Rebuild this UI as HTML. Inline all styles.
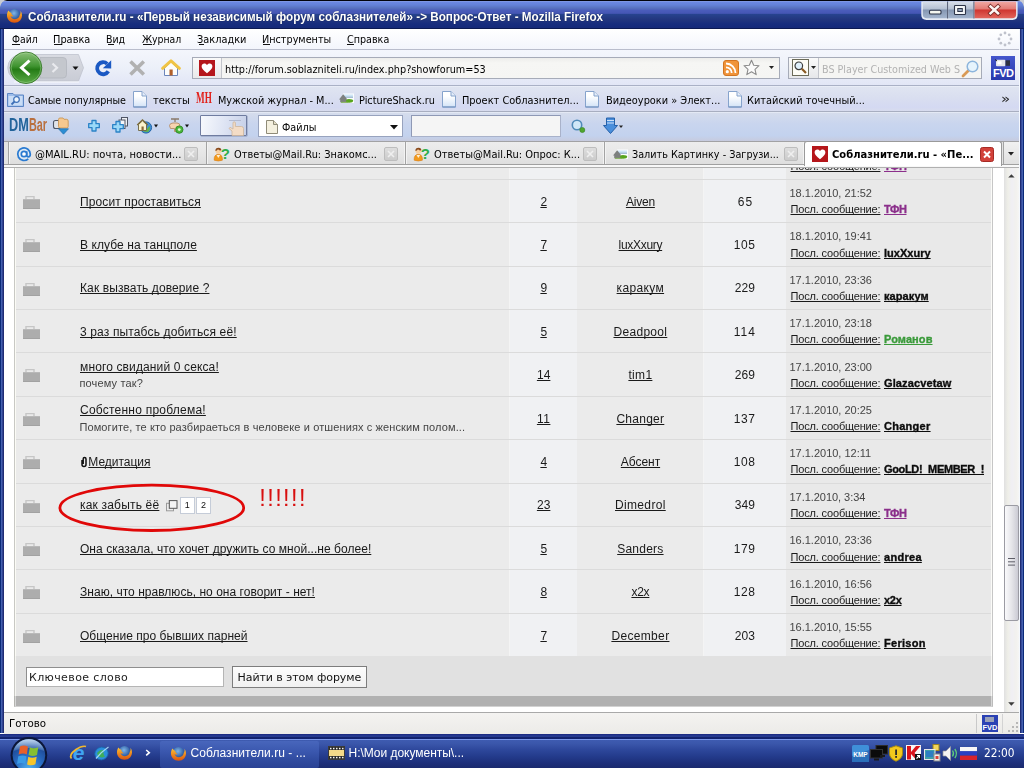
<!DOCTYPE html>
<html lang="ru">
<head>
<meta charset="utf-8">
<title>Соблазнители.ru - «Первый независимый форум соблазнителей» -> Вопрос-Ответ - Mozilla Firefox</title>
<style>
html,body{margin:0;padding:0}
body{width:1024px;height:768px;overflow:hidden;position:relative;background:#1c3a9a;font-family:"Liberation Sans",sans-serif;}
.a{position:absolute}
.t{position:absolute;white-space:pre;line-height:1;text-underline-offset:1px;text-decoration-thickness:1px;text-decoration-skip-ink:none}
.dj{font-family:"DejaVu Sans","Liberation Sans",sans-serif}
.sf{font-family:"Liberation Serif",serif}
.t{transform-origin:0 50%}
.bn{-webkit-text-stroke:.35px;text-decoration-thickness:1.4px}
.sh{text-shadow:0 0 1px rgba(0,0,20,.6)}
svg{position:absolute;overflow:visible}
/* window frame */
#title{left:0;top:0;width:1024px;height:29px;background:linear-gradient(#03040c 0,#03040c .8px,#8fa6e6 1px,#6c88e2 2px,#6482d8 5px,#5872c0 8px,#4a5cba 10.5px,#4556b4 13.4px,#27448f 14px,#23377f 19px,#172d7e 24px,#152a7a 27.5px,#0c1a52 28.2px,#0c1a52 29px)}
#corner-l{left:0;top:0;width:0;height:0}
#lb{left:0;top:29px;width:4px;height:710px;background:linear-gradient(90deg,#0a2a78 0,#0a2a78 .7px,#4560b0 1.3px,#3f59a8 2.2px,#1f2c74 2.9px,#1f2c74 4px)}
#rb{left:1019px;top:29px;width:5px;height:710px;background:linear-gradient(90deg,#f4f8fe 0,#f4f8fe .6px,#1f2c74 1.1px,#1f2c74 2px,#3f59a8 2.7px,#4560b0 3.6px,#0a2a78 4.3px,#0a2a78 5px)}
#bb{left:0;top:733px;width:1024px;height:6px;background:linear-gradient(#ffffff 0,#ffffff .9px,#1b2b80 1.2px,#1f3088 2px,#2c429a 3.2px,#14246f 4.5px,#0f2070 6px)}
#menubar{left:4px;top:29px;width:1015px;height:20px;background:linear-gradient(#ffffff,#f3f5fc)}
#menuline{left:4px;top:49px;width:1015px;height:1px;background:#b9bdcc}
#nav{left:4px;top:50px;width:1015px;height:35px;background:linear-gradient(#f4f6fc,#ecf0f9 50%,#e2e6f6)}
#navline{left:4px;top:85px;width:1015px;height:1px;background:#aab1c6}
#bm{left:4px;top:86px;width:1015px;height:25px;background:linear-gradient(#eff3fb 0,#dfe4f1 1.2px,#d9def0 50%,#d4d9f2 85%,#d8dcee 100%)}
#bmline{left:4px;top:111px;width:1015px;height:1px;background:#a8aec0}
#dm{left:4px;top:112px;width:1015px;height:29px;background:linear-gradient(#eef2fa 0,#d5dcec 1.2px,#c9d5ee 40%,#c3d2ee 82%,#c7cbde 100%)}
#tabs{left:4px;top:141.3px;width:1015px;height:26.7px;background:#e3e3e3;border-top:1px solid #a2a2a4;box-sizing:border-box}
#tabs .bl{left:0;top:21.7px;width:1015px;height:1px;background:#a0a0a0}
#tabs .bw{left:0;top:22.7px;width:1015px;height:2px;background:#f8f8f8}
#tabs .bl2{left:0;top:24.7px;width:1015px;height:1px;background:#b0b0b0}
.tab{top:142.3px;height:21.7px;background:linear-gradient(#ededed,#e6e6e6 55%,#dedede);border-left:1px solid #a3a3a3;box-sizing:border-box;box-shadow:inset 1px 0 #f3f3f3,inset -1px 0 #f3f3f3}
.tab.act{top:141.3px;height:24.7px;background:#fff;border:1px solid #9a9a9a;border-bottom:none;border-radius:3px 3px 0 0;box-shadow:none}
.tclose{width:14px;height:14px;top:147px;border:1px solid #bdbdbd;border-radius:2px;background:linear-gradient(#dedede,#cbcbcb);box-sizing:border-box}
/* content */
#page{left:4px;top:168px;width:1000px;height:544px;background:#fff;overflow:hidden}
#tbl{left:10px;top:0;width:975px;height:488.3px;background:#ebebeb;border-left:1px solid #c8c8c4;border-right:1px solid #c6c6c6;padding:0 1px;box-shadow:inset 1px 0 #fbfbf5,inset -1px 0 #fbfbf8}
.col{top:0;height:488.3px}
.rl{left:12px;width:975px;height:1px;background:#dbdbdb}
#foot{left:10px;top:488.3px;width:975px;height:40px;background:#e1e1e1;border-left:1px solid #c8c8c4;border-right:1px solid #c6c6c6;padding:0 1px;box-shadow:inset 1px 0 #f6f6f2,inset -1px 0 #f6f6f4}
#dark{left:10px;top:528.3px;width:975px;height:9.4px;background:#b1b1b1;border-left:1px solid #b4b4b0;border-right:1px solid #bbb;border-bottom:1px solid #d2d2d2;padding:0 1px;box-shadow:inset 1px 0 #d8d8d8,inset -1px 0 #d8d8d8}
#sb{left:1003.5px;top:168px;width:15.5px;height:544px;background:linear-gradient(90deg,#e0e0e0 0,#e6e6e4 1.5px,#efefe8 4px,#f0eff4 8px,#f2f1ee 12px,#f6f6f6 15.5px)}
#thumb{left:1004px;top:505px;width:14.5px;height:116px;border:1px solid #9b9ba3;border-radius:2px;box-sizing:border-box;background:linear-gradient(90deg,#fafafc,#e6e6ea 50%,#cbcbd4)}
#status{left:4px;top:712px;width:1015px;height:22px;background:linear-gradient(#f4f3f1,#ecebe8);border-top:1px solid #a9a9a9;box-sizing:border-box}
#task{left:0;top:739px;width:1024px;height:29px;background:linear-gradient(#7b97e8 0,#7b97e8 .9px,#3e5bb0 1.3px,#3a56aa 5px,#2d479b 11px,#233a8a 18px,#1d2f7a 24px,#1a2a6e 29px)}
.fold{width:17px;height:13px}
</style>
</head>
<body>
<!-- ===== window frame ===== -->
<div class="a" id="title"></div>
<svg style="left:0;top:0" width="8" height="8"><path d="M0 0H7Q1 1 0 7Z" fill="#c9ccd2"/></svg>
<svg style="left:1016px;top:0" width="8" height="8"><path d="M8 0H1Q7 1 8 7Z" fill="#c9ccd2"/></svg>
<div class="a" id="lb"></div><div class="a" id="rb"></div><div class="a" id="bb"></div>
<!-- firefox icon -->
<svg style="left:6px;top:7px" width="17" height="17" viewBox="0 0 17 17">
 <defs><radialGradient id="fxg" cx=".45" cy=".35" r=".6"><stop offset="0" stop-color="#7fb6e8"/><stop offset="1" stop-color="#1d4a94"/></radialGradient>
 <linearGradient id="fxo" x1="0" y1="0" x2="0" y2="1"><stop offset="0" stop-color="#f7c338"/><stop offset=".5" stop-color="#f08a1c"/><stop offset="1" stop-color="#d9540f"/></linearGradient></defs>
 <circle cx="8.5" cy="8" r="6" fill="url(#fxg)"/>
 <path d="M2.5 3.5C0.5 6 .3 10.5 3 13.5 6 16.6 11.5 16.4 14.3 13.2 16.6 10.5 16.6 6.5 14.5 3.8 14.8 5.5 14.5 6.8 13.8 7.8 13.6 10.6 11.3 12.3 8.8 12.2 6.6 12.1 5 10.8 4.6 9 5.6 9.8 6.8 9.7 7.6 9 6.2 8.6 5.3 7.4 5.4 6 4.2 5.6 3.2 4.6 2.5 3.5Z" fill="url(#fxo)"/>
</svg>
<!-- caption buttons -->
<svg style="left:920px;top:0" width="99" height="21" viewBox="920 0 99 21">
 <defs>
 <linearGradient id="cb1" x1="0" y1="0" x2="0" y2="1"><stop offset="0" stop-color="#d9dfea"/><stop offset=".45" stop-color="#b4bfd2"/><stop offset=".5" stop-color="#8596b2"/><stop offset="1" stop-color="#a3b4cd"/></linearGradient>
 <linearGradient id="cb2" x1="0" y1="0" x2="0" y2="1"><stop offset="0" stop-color="#f0a9a4"/><stop offset=".45" stop-color="#e27a74"/><stop offset=".5" stop-color="#cf3530"/><stop offset="1" stop-color="#e2655c"/></linearGradient>
 </defs>
 <path d="M921.300 1.500V15Q921.300 19.900 926.500 19.900H1012.500Q1017.600 19.900 1017.600 15V1.500Z" fill="#e6eaf4"/>
 <path d="M922.800 1.500H947V18.300H927Q922.800 18.300 922.800 14.500Z" fill="url(#cb1)"/>
 <path d="M948.200 1.500H973.300V18.300H948.200Z" fill="url(#cb1)"/>
 <path d="M974.500 1.500H1016.100V14.500Q1016.100 18.300 1012 18.300H974.500Z" fill="url(#cb2)"/>
 <path d="M947.600 1.500V18.500M973.900 1.500V18.500" stroke="#3b4560" stroke-width=".9"/>
 <rect x="929.500" y="10.300" width="11.500" height="3.700" rx="1" fill="#f4f6f0" stroke="#2d3448" stroke-width="1.100"/>
 <rect x="954.500" y="5.500" width="11" height="9" rx=".8" fill="#f4f6f8" stroke="#2d3448" stroke-width="1.100"/>
 <rect x="957.800" y="8.500" width="4.500" height="3" fill="#9aa9c0" stroke="#2d3448" stroke-width="1"/>
 <path d="M990.500 6.500L998 13.300M998 6.500L990.500 13.300" stroke="#7a2a26" stroke-width="4.200" stroke-linecap="square"/>
 <path d="M990.500 6.500L998 13.300M998 6.500L990.500 13.300" stroke="#fdf5f3" stroke-width="2.500" stroke-linecap="square"/>
</svg>
<!-- ===== menubar ===== -->
<div class="a" id="menubar"></div><div class="a" id="menuline"></div>
<!-- menu access-key underlines -->
<div class="a" style="left:12.0px;top:44.200px;width:7.5px;height:1px;background:#111"></div>
<div class="a" style="left:54.0px;top:44.200px;width:7.5px;height:1px;background:#111"></div>
<div class="a" style="left:107.5px;top:44.200px;width:6.5px;height:1px;background:#111"></div>
<div class="a" style="left:142.5px;top:44.200px;width:9.5px;height:1px;background:#111"></div>
<div class="a" style="left:198.5px;top:44.200px;width:5.5px;height:1px;background:#111"></div>
<div class="a" style="left:262.5px;top:44.200px;width:7.5px;height:1px;background:#111"></div>
<div class="a" style="left:346.5px;top:44.200px;width:7.5px;height:1px;background:#111"></div>
<!-- throbber -->
<svg style="left:997px;top:31px" width="16" height="16" viewBox="-8 -8 16 16">
 <g fill="#bfc2cc"><circle cx="0" cy="-6" r="1.400"/><circle cx="4.200" cy="-4.200" r="1.400"/><circle cx="6" cy="0" r="1.400"/><circle cx="4.200" cy="4.200" r="1.400"/><circle cx="0" cy="6" r="1.400"/><circle cx="-4.200" cy="4.200" r="1.400"/><circle cx="-6" cy="0" r="1.400"/><circle cx="-4.200" cy="-4.200" r="1.400"/></g>
</svg>
<!-- ===== nav toolbar ===== -->
<div class="a" id="nav"></div><div class="a" id="navline"></div>
<svg style="left:6px;top:51px" width="82" height="34" viewBox="6 51 82 34">
 <defs>
 <linearGradient id="bk" x1="0" y1="0" x2="0" y2="1"><stop offset="0" stop-color="#8cc07a"/><stop offset=".45" stop-color="#3f9430"/><stop offset=".55" stop-color="#257c16"/><stop offset="1" stop-color="#5cab48"/></linearGradient>
 <linearGradient id="pill" x1="0" y1="0" x2="0" y2="1"><stop offset="0" stop-color="#d9dbe2"/><stop offset="1" stop-color="#c9ccd5"/></linearGradient>
 </defs>
 <path d="M21 54.500H78.500L83.500 67.800 78.500 81H21A13.250 13.250 0 0 1 21 54.500Z" fill="url(#pill)" stroke="#bfc3ce" stroke-width=".8"/><path d="M14 82H79" stroke="#fff" stroke-width="1" opacity=".8"/>
 <path d="M40 57.500H63Q66.500 57.500 66.500 61V74.500Q66.500 78 63 78H40Z" fill="#c4c7cd" stroke="#b3b6be" stroke-width=".8"/>
 <path d="M52.500 63.500L57 67.800 52.500 72" fill="none" stroke="#e9eaee" stroke-width="2.200"/>
 <path d="M72.500 66.500H78.500L75.500 70Z" fill="#111"/>
 <circle cx="26" cy="67.800" r="15.800" fill="url(#bk)" stroke="#3c7a2e" stroke-width=".9"/>
 <circle cx="26" cy="67.800" r="14.800" fill="none" stroke="#a7d79a" stroke-opacity=".6" stroke-width=".8"/>
 <path d="M29.500 60.500L21.500 67.800 29.500 75" fill="none" stroke="#fff" stroke-width="3"/>
</svg>
<!-- reload -->
<svg style="left:94px;top:59px" width="18" height="18" viewBox="94 59 18 18">
 <path d="M108.300 71.300A6 6 0 1 1 107.200 63.800" fill="none" stroke="#1b59c3" stroke-width="3.800"/>
 <path d="M102.800 68.300L111.200 60.300V68.600Z" fill="#1b59c3"/>
</svg>
<!-- stop -->
<svg style="left:128px;top:59px" width="18" height="18" viewBox="128 59 18 18"><path d="M130.500 61.500L143.800 74.500M143.800 61.500L130.500 74.500" stroke="#b1b1b1" stroke-width="3.600"/></svg>
<!-- home -->
<svg style="left:161px;top:59px" width="21" height="18" viewBox="161 59 21 18">
 <path d="M164.500 68V75.500H177.500V68L171 62Z" fill="#fdfdfb" stroke="#6c86bb" stroke-width="1"/>
 <path d="M162.600 68.300L171 60.800 179.400 68.300" fill="none" stroke="#f0c445" stroke-width="3" stroke-linejoin="round" stroke-linecap="round"/>
 <rect x="169.500" y="69.500" width="3.200" height="6" fill="#b2602a"/>
</svg>
<!-- url bar -->
<div class="a" style="left:192px;top:57px;width:588px;height:22px;box-sizing:border-box;border:1px solid #a6abb8;background:linear-gradient(#ededeb,#f6f6f4 5px,#f5f5f3)"></div>
<div class="a" style="left:193px;top:58px;width:28px;height:20px;background:linear-gradient(#fafafa,#e9e9ea);border-right:1px solid #c3c5cc"></div>
<svg style="left:199px;top:60px" width="16" height="16" viewBox="0 0 16 16"><rect width="16" height="16" fill="#b5161b"/><path d="M8 13.200C4.500 10.400 2.600 8.600 2.600 6.300 2.600 4.500 3.900 3.400 5.300 3.400 6.500 3.400 7.500 4.100 8 5.100 8.500 4.100 9.500 3.400 10.700 3.400 12.100 3.400 13.400 4.500 13.400 6.300 13.400 8.600 11.500 10.400 8 13.200Z" fill="#fff"/></svg>
<!-- rss -->
<svg style="left:723px;top:60px" width="16" height="16" viewBox="0 0 16 16">
 <rect x=".5" y=".5" width="15" height="15" rx="2.500" fill="#f0943a" stroke="#d27420"/>
 <circle cx="4.300" cy="11.700" r="1.600" fill="#fff"/>
 <path d="M3 7.300A5.700 5.700 0 0 1 8.700 13M3 3.500A9.500 9.500 0 0 1 12.500 13" fill="none" stroke="#fff" stroke-width="1.800"/>
</svg>
<!-- star -->
<svg style="left:743px;top:59px" width="17" height="17" viewBox="0 0 17 17"><path d="M8.500 1.200L10.700 6.200 16 6.700 12 10.300 13.200 15.600 8.500 12.800 3.800 15.600 5 10.300 1 6.700 6.300 6.200Z" fill="#fbfbfb" stroke="#8b8b8b" stroke-width="1.100" stroke-linejoin="round"/></svg>
<svg style="left:769px;top:66px" width="6" height="4"><path d="M0 0H5L2.500 3Z" fill="#222"/></svg>
<!-- search bar -->
<div class="a" style="left:788px;top:57px;width:194px;height:22px;box-sizing:border-box;border:1px solid #a6abb8;background:#f5f5f3"></div>
<div class="a" style="left:789px;top:58px;width:29px;height:20px;background:linear-gradient(#fafafa,#e6e7ea);border-right:1px solid #c3c5cc"></div>
<svg style="left:792px;top:59px" width="17" height="17" viewBox="0 0 17 17">
 <rect x=".5" y=".5" width="16" height="16" fill="#fdfdf6" stroke="#6b6b58"/>
 <circle cx="6.800" cy="6.800" r="3.800" fill="#dff0fb" stroke="#3d3d3d" stroke-width="1.200"/>
 <path d="M9.800 9.800L14 14" stroke="#8a5a22" stroke-width="2.200"/>
</svg>
<svg style="left:811px;top:66px" width="6" height="4"><path d="M0 0H5L2.500 3Z" fill="#222"/></svg>
<svg style="left:961px;top:59px" width="19" height="19" viewBox="0 0 19 19">
 <path d="M7.500 11.500L2 17" stroke="#d99a55" stroke-width="2.800" stroke-linecap="round"/>
 <circle cx="11.500" cy="7.500" r="5.300" fill="#e6f4fd" stroke="#8db5dc" stroke-width="1.500"/>
</svg>
<!-- FVD -->
<svg style="left:991px;top:56px" width="24" height="24" viewBox="0 0 24 24">
 <defs><linearGradient id="fvdg" x1="0" y1="0" x2="0" y2="1"><stop offset="0" stop-color="#4456cc"/><stop offset="1" stop-color="#2838ac"/></linearGradient></defs><rect width="24" height="24" fill="url(#fvdg)"/>
 <rect x="5" y="3.800" width="9.500" height="6.400" rx="1" fill="#e4e6ea"/><rect x="6.500" y="5.300" width="4" height="3" fill="#fff"/><rect x="14.500" y="4.300" width="4.500" height="5.500" fill="#2c3040"/><path d="M4 3.500L6 5" stroke="#222" stroke-width="1"/>
 <text x="12.200" y="21.200" font-family="Liberation Sans,sans-serif" font-weight="bold" font-size="11" fill="#fff" text-anchor="middle" letter-spacing="-.5">FVD</text>
</svg>
<!-- ===== bookmarks toolbar ===== -->
<div class="a" id="bm"></div><div class="a" id="bmline"></div>
<svg style="left:7px;top:91px" width="17" height="16" viewBox="0 0 17 16">
 <path d="M.5 2.500H6L7.500 4H16.500V15.500H.5Z" fill="#9dbdea" stroke="#5b85c4"/>
 <rect x="1.500" y="5" width="14" height="9.500" fill="#c9dcf6"/>
 <circle cx="9.500" cy="8.500" r="2.800" fill="#eef5fd" stroke="#3d6fb8" stroke-width="1.200"/><path d="M7.500 10.500L4.500 13.500" stroke="#3d6fb8" stroke-width="1.800"/>
</svg>
<svg style="left:132.7px;top:90.5px" width="14" height="17" viewBox="0 0 14 17"><defs><linearGradient id="pgi" x1="0" y1="0" x2="0" y2="1"><stop offset=".3" stop-color="#ffffff"/><stop offset="1" stop-color="#d3e3f7"/></linearGradient></defs><path d="M.5.500H9L13.500 5V16H.5Z" fill="url(#pgi)" stroke="#86a3cc"/><path d="M9 .500V5H13.500" fill="#e4edf9" stroke="#86a3cc"/><path d="M.5 16H13.500" stroke="#6f8fbe"/></svg><svg style="left:441.7px;top:90.5px" width="14" height="17" viewBox="0 0 14 17"><path d="M.5.500H9L13.500 5V16H.5Z" fill="url(#pgi)" stroke="#86a3cc"/><path d="M9 .500V5H13.500" fill="#e4edf9" stroke="#86a3cc"/><path d="M.5 16H13.500" stroke="#6f8fbe"/></svg><svg style="left:584.7px;top:90.5px" width="14" height="17" viewBox="0 0 14 17"><path d="M.5.500H9L13.500 5V16H.5Z" fill="url(#pgi)" stroke="#86a3cc"/><path d="M9 .500V5H13.500" fill="#e4edf9" stroke="#86a3cc"/><path d="M.5 16H13.500" stroke="#6f8fbe"/></svg><svg style="left:727.6px;top:90.5px" width="14" height="17" viewBox="0 0 14 17"><path d="M.5.500H9L13.500 5V16H.5Z" fill="url(#pgi)" stroke="#86a3cc"/><path d="M9 .500V5H13.500" fill="#e4edf9" stroke="#86a3cc"/><path d="M.5 16H13.500" stroke="#6f8fbe"/></svg>
<svg style="left:339px;top:93px" width="16" height="11" viewBox="0 0 16 11">
 <rect x="4" y=".5" width="11" height="9.500" fill="#fbfdff"/><rect x="5" y="1.500" width="9" height="3" fill="#cfe6f6"/><rect x="6" y="3.700" width="8" height="1" fill="#8fa9c4"/>
 <ellipse cx="10" cy="7.800" rx="4.200" ry="1.900" fill="#58a51e"/>
 <path d="M0 6.500L4.200 1.300 8.400 6.500H7.200V9.300H1.200V6.500Z" fill="#7d807f"/><path d="M2 9.300H9" stroke="#7fae52" stroke-width="1"/>
</svg>
<!-- ===== DMBar ===== -->
<div class="a" id="dm"></div>
<!-- dm icons -->
<svg style="left:52px;top:116px" width="19" height="20" viewBox="52 116 19 20">
 <rect x="53.500" y="120.500" width="7" height="8" rx="2" fill="#dfe3ea" stroke="#4e5666" stroke-width="1.100"/>
 <path d="M58.500 119.500Q58.500 118 60 118H63L64 119.300H66.500Q68.200 119.300 68.200 121V126.500Q68.200 128 66.700 128H60Q58.500 128 58.500 126.500Z" fill="#f6c88f" stroke="#c99656" stroke-width=".9"/>
 <path d="M58.500 128.800H68.500L63.500 134.200Z" fill="#2c8ed3" stroke="#1f6eae" stroke-width=".7"/>
</svg>
<svg style="left:87px;top:119px" width="14" height="14" viewBox="87 119 14 14"><path d="M92 120.500H96V123.700H99.300V127.700H96V131H92V127.700H88.700V123.700H92Z" fill="#9bd9f8" stroke="#2a82c6" stroke-width="1.300" stroke-linejoin="round"/></svg>
<svg style="left:111px;top:116px" width="18" height="19" viewBox="111 116 18 19">
 <rect x="121.500" y="117.500" width="6" height="8.500" fill="#eef0f4" stroke="#4f5564" stroke-width="1"/>
 <rect x="119" y="120" width="6" height="8.500" fill="#f5f6f9" stroke="#4f5564" stroke-width="1"/>
 <path d="M116 121.500H120V124.700H123.300V128.700H120V132H116V128.700H112.700V124.700H116Z" fill="#9bd9f8" stroke="#2a82c6" stroke-width="1.300" stroke-linejoin="round"/>
</svg>
<svg style="left:136px;top:117px" width="24" height="18" viewBox="136 117 24 18">
 <circle cx="146" cy="127.500" r="5.600" fill="#3f8fd6" stroke="#2466a8" stroke-width="1"/><path d="M143 131.500Q147 130 149.500 126 151 129 148 132Z" fill="#5fb74a"/>
 <path d="M138.500 124.500V130.500H146.500V124.500L142.500 120.800Z" fill="#faf3cd" stroke="#6b6240" stroke-width=".9"/><path d="M137.200 125L142.500 119.800 147.800 125" fill="none" stroke="#7a6a38" stroke-width="1.200"/>
 <rect x="141.500" y="126.500" width="2.200" height="4" fill="#8a6a3a"/>
 <path d="M154 124.500H158L156 127.500Z" fill="#111"/>
</svg>
<svg style="left:168px;top:116px" width="24" height="19" viewBox="168 116 24 19">
 <path d="M171 119H179M175 119V122" stroke="#8a7a6a" stroke-width="1.300" fill="none"/>
 <path d="M169.500 125.500Q170 123 173 123H177Q180 123 180 126V131.500H174.500V128.500H170.500Z" fill="#f6d3b0" stroke="#b58c66" stroke-width=".9"/>
 <circle cx="179.300" cy="129.600" r="3.700" fill="#49b83a" stroke="#2c8624" stroke-width=".9"/><circle cx="179.300" cy="129.600" r="1.400" fill="#d9f6cf"/>
 <path d="M185 124.500H189L187 127.500Z" fill="#111"/>
</svg>
<!-- hand button -->
<div class="a" style="left:200px;top:115px;width:47px;height:21px;box-sizing:border-box;border:1px solid #6f7ca0;border-radius:1px;background:linear-gradient(100deg,#f7f9fd,#dfe5f4 50%,#c6d0e8);box-shadow:.5px .5px 0 #8c97b5"></div>
<svg style="left:226px;top:117px" width="20" height="19" viewBox="226 117 20 19">
 <path d="M232 135.500V131L229 128.500 230 127.300 233 129V123Q233 121.800 234.200 121.800 235.400 121.800 235.400 123V126.500H241.500Q243.500 126.500 243.500 128.500V135.500Z" fill="#f3dcc6" stroke="#cdb59c" stroke-width=".8"/>
 <path d="M229 120.500H241" stroke="#b3bad0" stroke-width="1"/>
</svg>
<!-- dm dropdown -->
<div class="a" style="left:258px;top:115px;width:145px;height:22px;box-sizing:border-box;border:1px solid #98a3be;background:#fff"></div>
<svg style="left:266px;top:119.500px" width="12" height="14" viewBox="0 0 12 14"><path d="M.5.500H7.500L11.500 4.500V13.500H.5Z" fill="#f4f0df" stroke="#8f8b78"/><path d="M7.500.5V4.500H11.500" fill="#e2dcc4" stroke="#8f8b78"/></svg>
<svg style="left:389.500px;top:125px" width="9" height="5"><path d="M0 0H8L4 4.500Z" fill="#111"/></svg>
<div class="a" style="left:411px;top:115px;width:150px;height:22px;box-sizing:border-box;border:1px solid #a9b2ca;border-top-color:#8f99b5;border-left-color:#8f99b5;background:#f5f5f5"></div>
<svg style="left:570px;top:118px" width="18" height="17" viewBox="0 0 18 17">
 <circle cx="7" cy="7" r="4.700" fill="#cfe7f7" stroke="#4f8ab8" stroke-width="1.600"/><circle cx="12.300" cy="12" r="2.500" fill="#4fa62e" stroke="#3c8a28" stroke-width=".7"/>
</svg>
<svg style="left:603px;top:117px" width="22" height="18" viewBox="0 0 22 18">
 <path d="M3.500 1H11.500V8.500H14.500L7.500 16.500 .5 8.500H3.500Z" fill="#4a8fdc" stroke="#2560a8" stroke-width="1"/>
 <path d="M4 3.500H11M4 6H11" stroke="#cfe2f7" stroke-width="1.200"/>
 <path d="M16 8.500H20L18 11Z" fill="#222"/>
</svg>
<!-- ===== tab strip ===== -->
<div class="a" id="tabs"><div class="a bl"></div><div class="a bw"></div><div class="a bl2"></div></div>
<div class="a tab" style="left:7.500px;width:199px"></div>
<div class="a tab" style="left:206px;width:199px"></div>
<div class="a tab" style="left:405px;width:199px"></div>
<div class="a tab" style="left:604px;width:200px"></div>
<div class="a tab act" style="left:804px;width:197.500px"></div>
<div class="a" style="left:1003px;top:142.300px;width:16px;height:21.700px;background:linear-gradient(#f1f1f1,#e0e0e0);border-left:1px solid #a3a3a3;box-sizing:border-box"></div>
<svg style="left:1008px;top:152px" width="6" height="4"><path d="M0 0H6L3 3.500Z" fill="#222"/></svg>
<!-- tab icons -->
<svg style="left:16px;top:146px" width="16" height="16" viewBox="0 0 16 16">
 <circle cx="8" cy="8" r="7.300" fill="#dcebfa" opacity=".7"/>
 <path d="M12.300 12.800A6.300 6.300 0 1 1 14.300 8.200Q14.300 10.800 12.300 10.800 10.700 10.800 10.700 9V5.300" fill="none" stroke="#2a7ad0" stroke-width="1.700"/>
 <circle cx="8" cy="8" r="2.700" fill="#fff" stroke="#2a7ad0" stroke-width="1.700"/>
</svg>
<svg style="left:213px;top:146px" width="17" height="17" viewBox="0 0 17 17"><path d="M1.200 14.200Q.8 8.500 5.300 8.300 9.800 8.500 9.400 14.200Q5.300 15.800 1.200 14.200Z" fill="#f39a1c" stroke="#d77a10" stroke-width=".6"/><path d="M3.500 9L5.300 12 7.200 9" fill="#fdf1d8"/><circle cx="5.300" cy="5.200" r="2.700" fill="#f8cfa0"/><path d="M2.400 5Q2.300 1.600 5.600 1.700 8.600 1.800 8.300 4.600Q6 4.400 5 3.200 4 4.800 2.400 5Z" fill="#8a4a1c"/><text x="12.300" y="13.300" font-family="Liberation Sans,sans-serif" font-weight="bold" font-size="15" fill="#2fae48" text-anchor="middle">?</text></svg><svg style="left:413px;top:146px" width="17" height="17" viewBox="0 0 17 17"><path d="M1.200 14.200Q.8 8.500 5.300 8.300 9.800 8.500 9.400 14.200Q5.300 15.800 1.200 14.200Z" fill="#f39a1c" stroke="#d77a10" stroke-width=".6"/><path d="M3.500 9L5.300 12 7.200 9" fill="#fdf1d8"/><circle cx="5.300" cy="5.200" r="2.700" fill="#f8cfa0"/><path d="M2.400 5Q2.300 1.600 5.600 1.700 8.600 1.800 8.300 4.600Q6 4.400 5 3.200 4 4.800 2.400 5Z" fill="#8a4a1c"/><text x="12.300" y="13.300" font-family="Liberation Sans,sans-serif" font-weight="bold" font-size="15" fill="#2fae48" text-anchor="middle">?</text></svg>
<svg style="left:613px;top:149px" width="16" height="11" viewBox="0 0 16 11">
 <rect x="4" y=".5" width="11" height="9.500" fill="#fbfdff"/><rect x="5" y="1.500" width="9" height="3" fill="#cfe6f6"/><rect x="6" y="3.700" width="8" height="1" fill="#8fa9c4"/>
 <ellipse cx="10" cy="7.800" rx="4.200" ry="1.900" fill="#58a51e"/>
 <path d="M0 6.500L4.200 1.300 8.400 6.500H7.200V9.300H1.200V6.500Z" fill="#7d807f"/><path d="M2 9.300H9" stroke="#7fae52" stroke-width="1"/>
</svg>
<svg style="left:812px;top:146px" width="16" height="16" viewBox="0 0 16 16"><rect width="16" height="16" fill="#b5161b"/><path d="M8 13.200C4.500 10.400 2.600 8.600 2.600 6.300 2.600 4.500 3.900 3.400 5.300 3.400 6.500 3.400 7.500 4.100 8 5.100 8.500 4.100 9.500 3.400 10.700 3.400 12.100 3.400 13.400 4.500 13.400 6.300 13.400 8.600 11.500 10.400 8 13.200Z" fill="#fff"/></svg>
<div class="a tclose" style="left:184px"></div><svg style="left:187px;top:150px" width="8" height="8"><path d="M1 1L7 7M7 1L1 7" stroke="#efefef" stroke-width="1.600"/></svg><div class="a tclose" style="left:384px"></div><svg style="left:387px;top:150px" width="8" height="8"><path d="M1 1L7 7M7 1L1 7" stroke="#efefef" stroke-width="1.600"/></svg><div class="a tclose" style="left:583px"></div><svg style="left:586px;top:150px" width="8" height="8"><path d="M1 1L7 7M7 1L1 7" stroke="#efefef" stroke-width="1.600"/></svg><div class="a tclose" style="left:784px"></div><svg style="left:787px;top:150px" width="8" height="8"><path d="M1 1L7 7M7 1L1 7" stroke="#efefef" stroke-width="1.600"/></svg>
<svg style="left:980px;top:147px" width="14" height="15" viewBox="0 0 14 15"><rect x=".5" y=".5" width="13" height="14" rx="2" fill="#d2413a" stroke="#a62a25"/><path d="M4 4.500L10 10.500M10 4.500L4 10.500" stroke="#fff" stroke-width="2"/></svg>
<!-- ===== page ===== -->
<div class="a" id="page">
 <div class="a" id="tbl">
  <div class="a col" style="left:494.800px;width:67.700px;background:#f0f1f3;box-shadow:-1px 0 #f4f4f4"></div>
  <div class="a col" style="left:689px;width:81.500px;background:#f0f1f3;box-shadow:-1px 0 #f4f4f4"></div>
  <div class="a col" style="left:770.500px;width:205.500px;background:#e9e9e9"></div>
 </div>
 <div class="a" id="foot"></div>
 <div class="a" id="dark"></div>
 <div class="a rl" style="top:11px"></div><div class="a rl" style="top:54px"></div><div class="a rl" style="top:98px"></div><div class="a rl" style="top:141px"></div><div class="a rl" style="top:184px"></div><div class="a rl" style="top:228px"></div><div class="a rl" style="top:271px"></div><div class="a rl" style="top:315px"></div><div class="a rl" style="top:358px"></div><div class="a rl" style="top:401px"></div><div class="a rl" style="top:445px"></div>
</div>
<svg style="left:22px;top:195.0px" width="19" height="15" viewBox="0 0 19 15"><rect x="1" y="4" width="17" height="10" fill="#adadad"/><path d="M4 4.500V1.600H12V4.500" fill="none" stroke="#c6c6c6" stroke-width="1.400"/><rect x="1" y="4" width="17" height="1" fill="#b9b9b9"/><rect x="1" y="13" width="17" height="1" fill="#a2a2a2"/></svg><svg style="left:22px;top:238.3px" width="19" height="15" viewBox="0 0 19 15"><rect x="1" y="4" width="17" height="10" fill="#adadad"/><path d="M4 4.500V1.600H12V4.500" fill="none" stroke="#c6c6c6" stroke-width="1.400"/><rect x="1" y="4" width="17" height="1" fill="#b9b9b9"/><rect x="1" y="13" width="17" height="1" fill="#a2a2a2"/></svg><svg style="left:22px;top:281.9px" width="19" height="15" viewBox="0 0 19 15"><rect x="1" y="4" width="17" height="10" fill="#adadad"/><path d="M4 4.500V1.600H12V4.500" fill="none" stroke="#c6c6c6" stroke-width="1.400"/><rect x="1" y="4" width="17" height="1" fill="#b9b9b9"/><rect x="1" y="13" width="17" height="1" fill="#a2a2a2"/></svg><svg style="left:22px;top:325.1px" width="19" height="15" viewBox="0 0 19 15"><rect x="1" y="4" width="17" height="10" fill="#adadad"/><path d="M4 4.500V1.600H12V4.500" fill="none" stroke="#c6c6c6" stroke-width="1.400"/><rect x="1" y="4" width="17" height="1" fill="#b9b9b9"/><rect x="1" y="13" width="17" height="1" fill="#a2a2a2"/></svg><svg style="left:22px;top:368.3px" width="19" height="15" viewBox="0 0 19 15"><rect x="1" y="4" width="17" height="10" fill="#adadad"/><path d="M4 4.500V1.600H12V4.500" fill="none" stroke="#c6c6c6" stroke-width="1.400"/><rect x="1" y="4" width="17" height="1" fill="#b9b9b9"/><rect x="1" y="13" width="17" height="1" fill="#a2a2a2"/></svg><svg style="left:22px;top:411.7px" width="19" height="15" viewBox="0 0 19 15"><rect x="1" y="4" width="17" height="10" fill="#adadad"/><path d="M4 4.500V1.600H12V4.500" fill="none" stroke="#c6c6c6" stroke-width="1.400"/><rect x="1" y="4" width="17" height="1" fill="#b9b9b9"/><rect x="1" y="13" width="17" height="1" fill="#a2a2a2"/></svg><svg style="left:22px;top:455.2px" width="19" height="15" viewBox="0 0 19 15"><rect x="1" y="4" width="17" height="10" fill="#adadad"/><path d="M4 4.500V1.600H12V4.500" fill="none" stroke="#c6c6c6" stroke-width="1.400"/><rect x="1" y="4" width="17" height="1" fill="#b9b9b9"/><rect x="1" y="13" width="17" height="1" fill="#a2a2a2"/></svg><svg style="left:22px;top:498.9px" width="19" height="15" viewBox="0 0 19 15"><rect x="1" y="4" width="17" height="10" fill="#adadad"/><path d="M4 4.500V1.600H12V4.500" fill="none" stroke="#c6c6c6" stroke-width="1.400"/><rect x="1" y="4" width="17" height="1" fill="#b9b9b9"/><rect x="1" y="13" width="17" height="1" fill="#a2a2a2"/></svg><svg style="left:22px;top:542.1px" width="19" height="15" viewBox="0 0 19 15"><rect x="1" y="4" width="17" height="10" fill="#adadad"/><path d="M4 4.500V1.600H12V4.500" fill="none" stroke="#c6c6c6" stroke-width="1.400"/><rect x="1" y="4" width="17" height="1" fill="#b9b9b9"/><rect x="1" y="13" width="17" height="1" fill="#a2a2a2"/></svg><svg style="left:22px;top:585.3px" width="19" height="15" viewBox="0 0 19 15"><rect x="1" y="4" width="17" height="10" fill="#adadad"/><path d="M4 4.500V1.600H12V4.500" fill="none" stroke="#c6c6c6" stroke-width="1.400"/><rect x="1" y="4" width="17" height="1" fill="#b9b9b9"/><rect x="1" y="13" width="17" height="1" fill="#a2a2a2"/></svg><svg style="left:22px;top:629.0px" width="19" height="15" viewBox="0 0 19 15"><rect x="1" y="4" width="17" height="10" fill="#adadad"/><path d="M4 4.500V1.600H12V4.500" fill="none" stroke="#c6c6c6" stroke-width="1.400"/><rect x="1" y="4" width="17" height="1" fill="#b9b9b9"/><rect x="1" y="13" width="17" height="1" fill="#a2a2a2"/></svg>
<div class="a" style="left:0;top:168px;width:1002px;height:11px;overflow:hidden;will-change:transform"><span class="t" style="left:790.5px;top:-7.2px;font-size:11px;color:#1a1a1a;letter-spacing:-0.17px;text-decoration:underline;">Посл. сообщение:</span><span class="t bn" style="left:884.0px;top:-7.2px;font-size:11px;color:#8b2f8b;letter-spacing:-0.38px;font-weight:bold;text-decoration:underline;">ТФН</span></div>
<!-- attachment icon -->
<svg style="left:80px;top:456px" width="8" height="12" viewBox="0 0 8 12"><path d="M2 4V8.500Q2 10.500 4 10.500 6 10.500 6 8.500V3Q6 1.500 4.500 1.500 3.200 1.500 3.200 3V8" fill="none" stroke="#111" stroke-width="1.500"/></svg>
<!-- multipage -->
<svg style="left:166px;top:499.500px" width="12" height="12" viewBox="0 0 12 12"><rect x=".5" y="3.300" width="7" height="7.500" fill="#ececec" stroke="#9a9a9a"/><rect x="3.300" y=".6" width="7.700" height="7.700" fill="#f4f4f4" stroke="#555"/></svg>
<div class="a" style="left:180px;top:497px;width:15px;height:17.300px;box-sizing:border-box;border:1px solid #c5ccd8;background:#fff"></div>
<div class="a" style="left:196px;top:497px;width:15px;height:17.300px;box-sizing:border-box;border:1px solid #c5ccd8;background:#fff"></div>
<svg style="left:55px;top:480px" width="196" height="56" viewBox="55 480 196 56"><ellipse cx="151.800" cy="507.800" rx="91.900" ry="22.700" fill="none" stroke="#e00808" stroke-width="2.800"/></svg>
<!-- search form -->
<div class="a" style="left:26px;top:667px;width:198px;height:19.500px;box-sizing:border-box;border:1px solid #8e8e8e;border-right-color:#b5b5b5;border-bottom-color:#b5b5b5;background:#fff"></div>
<div class="a" style="left:232px;top:666px;width:135px;height:21.500px;box-sizing:border-box;border:1px solid #7d7d7d;background:linear-gradient(#fdfdfd,#f1f1f1)"></div>
<!-- scrollbar -->
<div class="a" id="sb"></div>
<svg style="left:1007px;top:173px" width="9" height="6"><path d="M1.200 4.600L4.400 1.200 7.600 4.600Z" fill="#3c3c3c"/></svg>
<svg style="left:1007px;top:701px" width="9" height="6"><path d="M1.200 1.200L4.400 4.800 7.600 1.200Z" fill="#3c3c3c"/></svg>
<div class="a" id="thumb"></div>
<div class="a" style="left:1008px;top:558px;width:6.500px;height:1.300px;background:#5e5e68;box-shadow:0 3.300px 0 #5e5e68,0 6.600px 0 #5e5e68"></div>
<!-- ===== status bar ===== -->
<div class="a" id="status"></div>
<div class="a" style="left:976px;top:714px;width:1px;height:19px;background:#c9c9c9"></div><div class="a" style="left:1002px;top:714px;width:1px;height:19px;background:#d3d3d3"></div>
<svg style="left:982px;top:715px" width="16" height="17" viewBox="0 0 16 17"><rect width="16" height="17" fill="#2b42b4"/><rect x="3" y="2" width="9" height="5" fill="#9aa2b8"/><text x="8" y="15" font-family="Liberation Sans,sans-serif" font-weight="bold" font-size="7.500" fill="#fff" text-anchor="middle">FVD</text></svg>
<svg style="left:1008px;top:722px" width="11" height="11"><g fill="#b7b7b7"><rect x="8" y="0" width="2" height="2"/><rect x="4" y="4" width="2" height="2"/><rect x="8" y="4" width="2" height="2"/><rect x="0" y="8" width="2" height="2"/><rect x="4" y="8" width="2" height="2"/><rect x="8" y="8" width="2" height="2"/></g></svg>
<!-- ===== taskbar ===== -->
<div class="a" id="task"></div>
<div class="a" style="left:160px;top:741px;width:159px;height:27px;background:linear-gradient(#4866bc,#3a57ae 40%,#304b9f 70%,#2a4294);border-radius:2px"></div>

<svg style="left:9px;top:735px" width="40" height="33" viewBox="9 735 40 33">
 <defs><radialGradient id="orb" cx=".5" cy=".95" r=".9"><stop offset="0" stop-color="#52b6f2"/><stop offset=".45" stop-color="#2a6fc6"/><stop offset=".8" stop-color="#204f9e"/><stop offset="1" stop-color="#5f8cc4"/></radialGradient>
 <linearGradient id="orbg" x1="0" y1="0" x2="0" y2="1"><stop offset="0" stop-color="#cfe0f4" stop-opacity=".85"/><stop offset="1" stop-color="#9fc0e6" stop-opacity=".15"/></linearGradient></defs>
 <circle cx="28.900" cy="755.200" r="18.300" fill="#0b1638"/>
 <circle cx="28.900" cy="755.200" r="16.300" fill="url(#orb)"/>
 <path d="M13.500 751A16 16 0 0 1 44.300 751Q29 745 13.500 751Z" fill="url(#orbg)"/>
 <path d="M20 746.500Q24 744.500 28 746.800L26.800 754.500Q23 752.600 18.600 754.600Z" fill="#e8602a"/>
 <path d="M29.800 747.300Q33.500 749.300 38.300 747.200L37 755Q33 757 28.600 755Z" fill="#86bf33"/>
 <path d="M18.300 756.300Q22.500 754.500 26.500 756.300L25.300 764Q21.500 762.200 17 764Z" fill="#3a9be6"/>
 <path d="M28.300 756.800Q32 758.800 36.700 756.700L35.400 764.300Q31.500 766.300 27.100 764.400Z" fill="#f7c52a"/>
</svg>
<svg style="left:69px;top:743px" width="19" height="20" viewBox="69 743 19 20">
 <text x="78.500" y="760" font-family="Liberation Sans,sans-serif" font-style="italic" font-weight="bold" font-size="21" fill="#3fa4f2" text-anchor="middle">e</text>
 <path d="M71.500 758.500Q68.500 755 76 749.500 82 745.300 86 746.500" fill="none" stroke="#f0b82e" stroke-width="1.700"/>
</svg>
<svg style="left:93px;top:744px" width="18" height="18" viewBox="0 0 18 18">
 <ellipse cx="8.500" cy="9.500" rx="6.800" ry="6.300" fill="#2a8fdc" stroke="#1c64a8" stroke-width=".8" transform="rotate(-25 8.500 9.500)"/>
 <path d="M4 9Q7 5 11 6.500 9.500 10 12 12.500 8 14.500 5 12Z" fill="#3fae58"/>
 <path d="M3 14.500Q8 8 15.500 3" fill="none" stroke="#a9dcf8" stroke-width="1.300" opacity=".9"/>
</svg>
<svg style="left:116px;top:744px" width="17" height="17" viewBox="0 0 17 17">
 <circle cx="8.500" cy="8" r="6" fill="url(#fxg)"/>
 <path d="M2.500 3.500C0.500 6 .3 10.500 3 13.500 6 16.600 11.500 16.400 14.300 13.200 16.600 10.500 16.600 6.500 14.500 3.800 14.800 5.500 14.500 6.800 13.800 7.800 13.600 10.600 11.300 12.300 8.800 12.200 6.600 12.100 5 10.800 4.600 9 5.600 9.800 6.800 9.700 7.600 9 6.200 8.600 5.300 7.400 5.400 6 4.200 5.600 3.200 4.600 2.500 3.500Z" fill="url(#fxo)"/>
</svg>
<svg style="left:145px;top:749px" width="7" height="8"><path d="M1.200 1L4.300 3.700 1.200 6.400" fill="none" stroke="#fff" stroke-width="1.600"/></svg>
<svg style="left:170px;top:745px" width="17" height="17" viewBox="0 0 17 17">
 <circle cx="8.500" cy="8" r="6" fill="url(#fxg)"/>
 <path d="M2.500 3.500C0.500 6 .3 10.500 3 13.500 6 16.600 11.500 16.400 14.300 13.200 16.600 10.500 16.600 6.500 14.500 3.800 14.800 5.500 14.500 6.800 13.800 7.800 13.600 10.600 11.300 12.300 8.800 12.200 6.600 12.100 5 10.800 4.600 9 5.600 9.800 6.800 9.700 7.600 9 6.200 8.600 5.300 7.400 5.400 6 4.200 5.600 3.200 4.600 2.500 3.500Z" fill="url(#fxo)"/>
</svg>
<svg style="left:328px;top:746px" width="17" height="14" viewBox="0 0 17 14">
 <rect x=".5" y=".5" width="16" height="13" fill="#f3d98a" stroke="#3a3a3a"/><rect x="1" y="1" width="15" height="3" fill="#2b2b2b"/><rect x="1" y="10" width="15" height="3" fill="#2b2b2b"/>
 <g fill="#f5f5f5"><rect x="2" y="1.800" width="1.500" height="1.500"/><rect x="5" y="1.800" width="1.500" height="1.500"/><rect x="8" y="1.800" width="1.500" height="1.500"/><rect x="11" y="1.800" width="1.500" height="1.500"/><rect x="14" y="1.800" width="1.500" height="1.500"/><rect x="2" y="10.800" width="1.500" height="1.500"/><rect x="5" y="10.800" width="1.500" height="1.500"/><rect x="8" y="10.800" width="1.500" height="1.500"/><rect x="11" y="10.800" width="1.500" height="1.500"/><rect x="14" y="10.800" width="1.500" height="1.500"/></g>
</svg>
<!-- tray -->
<svg style="left:852px;top:745px" width="17" height="17" viewBox="0 0 17 17"><rect width="17" height="17" rx="1.500" fill="#3f8fd9"/><path d="M0 11L17 5V17H0Z" fill="#2a6fba"/><text x="8.500" y="11.500" font-family="Liberation Sans,sans-serif" font-weight="bold" font-size="6.500" fill="#fff" text-anchor="middle">KMP</text></svg>
<svg style="left:870px;top:745px" width="18" height="17" viewBox="0 0 18 17"><rect x="6" y=".5" width="11.500" height="8.500" fill="#0b0b0b" stroke="#2d2d2d"/><rect x=".5" y="4.500" width="12" height="8.500" fill="#0b0b0b" stroke="#333"/><rect x="4" y="13.500" width="5" height="2" fill="#1a1a1a"/><rect x="10" y="10" width="5" height="2" fill="#1a1a1a"/></svg>
<svg style="left:888px;top:745px" width="16" height="17" viewBox="0 0 16 17"><path d="M8 .8L14.500 3V8.500Q14.500 13.500 8 16.200 1.500 13.500 1.500 8.500V3Z" fill="#f2c81c" stroke="#a88a10"/><rect x="7.200" y="4.500" width="1.800" height="5.500" fill="#2b2b2b"/><rect x="7.200" y="11" width="1.800" height="1.800" fill="#2b2b2b"/></svg>
<svg style="left:906px;top:745px" width="16" height="16" viewBox="0 0 16 16"><rect width="15" height="15" fill="#f6f6f6"/><path d="M1 1H5V7L10 1H14.500L8.500 8 14.500 14.500H10L5 9V14.500H1Z" fill="#d8141c"/><path d="M9 9H15V15H9Z" fill="#111"/><path d="M10.500 13.500L13.500 10.500M11 10.500H13.500V13" stroke="#fff" stroke-width="1.100" fill="none"/></svg>
<svg style="left:924px;top:744px" width="17" height="18" viewBox="0 0 17 18"><rect x="9" y=".5" width="6" height="6" fill="#f2d65a" stroke="#9c8420"/><rect x=".5" y="5.500" width="10.500" height="10" fill="#3fa0a8" stroke="#e8e8e8"/><rect x="2" y="7" width="7.500" height="6" fill="#2d7fc2"/><rect x="10" y="10" width="6" height="7" fill="#f2f2f2" stroke="#888"/><rect x="11.500" y="12" width="3" height="3" fill="#d8443a"/></svg>
<svg style="left:942px;top:745px" width="17" height="17" viewBox="0 0 17 17"><path d="M1 6H4L8.500 1.500V15.500L4 11H1Z" fill="#f4f4f4" stroke="#9a9a9a" stroke-width=".7"/><path d="M10.500 5.500Q12.500 8.500 10.500 11.500M12.800 4Q16 8.500 12.800 13" fill="none" stroke="#5fd07a" stroke-width="1.300"/></svg>
<svg style="left:960px;top:747px" width="17" height="13" viewBox="0 0 17 13"><rect width="17" height="4.300" fill="#f7f7f7"/><rect y="4.300" width="17" height="4.300" fill="#2a3fc4"/><rect y="8.600" width="17" height="4.400" fill="#d8242c"/></svg>

<div class="a" style="left:0;top:0;width:1024px;height:768px;will-change:transform"><span class="t" style="left:80.0px;top:195.8px;font-size:12px;color:#1a1a1a;letter-spacing:0.11px;text-decoration:underline;">Просит проставиться</span>
<span class="t" style="left:540.4px;top:195.8px;font-size:12px;color:#1a1a1a;letter-spacing:-0.29px;text-decoration:underline;">2</span>
<span class="t" style="left:625.9px;top:195.8px;font-size:12px;color:#1a1a1a;letter-spacing:-0.21px;text-decoration:underline;">Aiven</span>
<span class="t" style="left:737.8px;top:195.8px;font-size:12px;color:#1a1a1a;letter-spacing:1.10px;">65</span>
<span class="t" style="left:789.5px;top:188.1px;font-size:11px;color:#444;letter-spacing:-0.01px;">18.1.2010, 21:52</span>
<span class="t" style="left:790.5px;top:204.4px;font-size:11px;color:#1a1a1a;letter-spacing:-0.17px;text-decoration:underline;">Посл. сообщение:</span>
<span class="t bn" style="left:884.0px;top:204.4px;font-size:11px;color:#8b2f8b;letter-spacing:-0.38px;font-weight:bold;text-decoration:underline;">ТФН</span>
<span class="t" style="left:80.0px;top:239.1px;font-size:12px;color:#1a1a1a;letter-spacing:0.08px;text-decoration:underline;">В клубе на танцполе</span>
<span class="t" style="left:540.4px;top:239.1px;font-size:12px;color:#1a1a1a;letter-spacing:-0.29px;text-decoration:underline;">7</span>
<span class="t" style="left:618.6px;top:239.1px;font-size:12px;color:#1a1a1a;letter-spacing:-0.31px;text-decoration:underline;">luxXxury</span>
<span class="t" style="left:733.7px;top:239.1px;font-size:12px;color:#1a1a1a;letter-spacing:0.60px;">105</span>
<span class="t" style="left:789.5px;top:231.4px;font-size:11px;color:#444;letter-spacing:-0.01px;">18.1.2010, 19:41</span>
<span class="t" style="left:790.5px;top:247.7px;font-size:11px;color:#1a1a1a;letter-spacing:-0.17px;text-decoration:underline;">Посл. сообщение:</span>
<span class="t bn" style="left:884.0px;top:247.7px;font-size:11px;color:#0c0c0c;letter-spacing:0.02px;font-weight:bold;text-decoration:underline;">luxXxury</span>
<span class="t" style="left:80.0px;top:281.7px;font-size:12px;color:#1a1a1a;letter-spacing:0.11px;text-decoration:underline;">Как вызвать доверие ?</span>
<span class="t" style="left:540.4px;top:281.7px;font-size:12px;color:#1a1a1a;letter-spacing:-0.29px;text-decoration:underline;">9</span>
<span class="t" style="left:616.6px;top:281.7px;font-size:12px;color:#1a1a1a;letter-spacing:0.35px;text-decoration:underline;">каракум</span>
<span class="t" style="left:734.7px;top:281.7px;font-size:12px;color:#1a1a1a;letter-spacing:0.10px;">229</span>
<span class="t" style="left:789.5px;top:275.0px;font-size:11px;color:#444;letter-spacing:-0.01px;">17.1.2010, 23:36</span>
<span class="t" style="left:790.5px;top:291.3px;font-size:11px;color:#1a1a1a;letter-spacing:-0.17px;text-decoration:underline;">Посл. сообщение:</span>
<span class="t bn" style="left:884.0px;top:291.3px;font-size:11px;color:#0c0c0c;letter-spacing:0.09px;font-weight:bold;text-decoration:underline;">каракум</span>
<span class="t" style="left:80.0px;top:325.9px;font-size:12px;color:#1a1a1a;letter-spacing:0.14px;text-decoration:underline;">3 раз пытабсь добиться её!</span>
<span class="t" style="left:540.4px;top:325.9px;font-size:12px;color:#1a1a1a;letter-spacing:-0.29px;text-decoration:underline;">5</span>
<span class="t" style="left:613.5px;top:325.9px;font-size:12px;color:#1a1a1a;letter-spacing:0.30px;text-decoration:underline;">Deadpool</span>
<span class="t" style="left:733.7px;top:325.9px;font-size:12px;color:#1a1a1a;letter-spacing:1.10px;">114</span>
<span class="t" style="left:789.5px;top:318.2px;font-size:11px;color:#444;letter-spacing:-0.01px;">17.1.2010, 23:18</span>
<span class="t" style="left:790.5px;top:333.5px;font-size:11px;color:#1a1a1a;letter-spacing:-0.17px;text-decoration:underline;">Посл. сообщение:</span>
<span class="t bn" style="left:884.0px;top:333.5px;font-size:11px;color:#3a9a3a;letter-spacing:0.09px;font-weight:bold;text-decoration:underline;">Романов</span>
<span class="t" style="left:80.0px;top:360.6px;font-size:12px;color:#1a1a1a;letter-spacing:0.13px;text-decoration:underline;">много свиданий 0 секса!</span>
<span class="t" style="left:536.9px;top:369.1px;font-size:12px;color:#1a1a1a;letter-spacing:0.07px;text-decoration:underline;">14</span>
<span class="t" style="left:628.4px;top:369.1px;font-size:12px;color:#1a1a1a;letter-spacing:0.33px;text-decoration:underline;">tim1</span>
<span class="t" style="left:734.7px;top:369.1px;font-size:12px;color:#1a1a1a;letter-spacing:0.10px;">269</span>
<span class="t" style="left:789.5px;top:362.4px;font-size:11px;color:#444;letter-spacing:-0.01px;">17.1.2010, 23:00</span>
<span class="t" style="left:790.5px;top:377.7px;font-size:11px;color:#1a1a1a;letter-spacing:-0.17px;text-decoration:underline;">Посл. сообщение:</span>
<span class="t bn" style="left:884.0px;top:377.7px;font-size:11px;color:#0c0c0c;letter-spacing:0.13px;font-weight:bold;text-decoration:underline;">Glazacvetaw</span>
<span class="t" style="left:80.0px;top:404.0px;font-size:12px;color:#1a1a1a;letter-spacing:0.23px;text-decoration:underline;">Собстенно проблема!</span>
<span class="t" style="left:536.9px;top:412.5px;font-size:12px;color:#1a1a1a;letter-spacing:0.52px;text-decoration:underline;">11</span>
<span class="t" style="left:616.4px;top:412.5px;font-size:12px;color:#1a1a1a;letter-spacing:0.27px;text-decoration:underline;">Changer</span>
<span class="t" style="left:733.7px;top:412.5px;font-size:12px;color:#1a1a1a;letter-spacing:0.60px;">137</span>
<span class="t" style="left:789.5px;top:404.8px;font-size:11px;color:#444;letter-spacing:-0.01px;">17.1.2010, 20:25</span>
<span class="t" style="left:790.5px;top:421.1px;font-size:11px;color:#1a1a1a;letter-spacing:-0.17px;text-decoration:underline;">Посл. сообщение:</span>
<span class="t bn" style="left:884.0px;top:421.1px;font-size:11px;color:#0c0c0c;letter-spacing:0.28px;font-weight:bold;text-decoration:underline;">Changer</span>
<span class="t" style="left:88.3px;top:456.0px;font-size:12px;color:#1a1a1a;letter-spacing:-0.02px;text-decoration:underline;">Медитация</span>
<span class="t" style="left:540.4px;top:456.0px;font-size:12px;color:#1a1a1a;letter-spacing:-0.29px;text-decoration:underline;">4</span>
<span class="t" style="left:620.8px;top:456.0px;font-size:12px;color:#1a1a1a;letter-spacing:-0.04px;text-decoration:underline;">Абсент</span>
<span class="t" style="left:733.7px;top:456.0px;font-size:12px;color:#1a1a1a;letter-spacing:0.60px;">108</span>
<span class="t" style="left:789.5px;top:448.3px;font-size:11px;color:#444;letter-spacing:-0.01px;">17.1.2010, 12:11</span>
<span class="t" style="left:790.5px;top:463.6px;font-size:11px;color:#1a1a1a;letter-spacing:-0.17px;text-decoration:underline;">Посл. сообщение:</span>
<span class="t bn" style="left:884.0px;top:463.6px;font-size:11px;color:#0c0c0c;letter-spacing:-0.34px;font-weight:bold;text-decoration:underline;">GooLD!_MEMBER_!</span>
<span class="t" style="left:80.0px;top:498.7px;font-size:12px;color:#1a1a1a;letter-spacing:0.19px;text-decoration:underline;">как забыть ёё</span>
<span class="t" style="left:536.9px;top:498.7px;font-size:12px;color:#1a1a1a;letter-spacing:0.07px;text-decoration:underline;">23</span>
<span class="t" style="left:615.0px;top:498.7px;font-size:12px;color:#1a1a1a;letter-spacing:0.34px;text-decoration:underline;">Dimedrol</span>
<span class="t" style="left:734.7px;top:498.7px;font-size:12px;color:#1a1a1a;letter-spacing:0.10px;">349</span>
<span class="t" style="left:789.5px;top:492.0px;font-size:11px;color:#444;letter-spacing:-0.04px;">17.1.2010, 3:34</span>
<span class="t" style="left:790.5px;top:508.3px;font-size:11px;color:#1a1a1a;letter-spacing:-0.17px;text-decoration:underline;">Посл. сообщение:</span>
<span class="t bn" style="left:884.0px;top:508.3px;font-size:11px;color:#8b2f8b;letter-spacing:-0.38px;font-weight:bold;text-decoration:underline;">ТФН</span>
<span class="t" style="left:80.0px;top:542.9px;font-size:12px;color:#1a1a1a;letter-spacing:0.04px;text-decoration:underline;">Она сказала, что хочет дружить со мной...не более!</span>
<span class="t" style="left:540.4px;top:542.9px;font-size:12px;color:#1a1a1a;letter-spacing:-0.29px;text-decoration:underline;">5</span>
<span class="t" style="left:617.2px;top:542.9px;font-size:12px;color:#1a1a1a;letter-spacing:0.24px;text-decoration:underline;">Sanders</span>
<span class="t" style="left:733.7px;top:542.9px;font-size:12px;color:#1a1a1a;letter-spacing:0.60px;">179</span>
<span class="t" style="left:789.5px;top:535.2px;font-size:11px;color:#444;letter-spacing:-0.01px;">16.1.2010, 23:36</span>
<span class="t" style="left:790.5px;top:551.5px;font-size:11px;color:#1a1a1a;letter-spacing:-0.17px;text-decoration:underline;">Посл. сообщение:</span>
<span class="t bn" style="left:884.0px;top:551.5px;font-size:11px;color:#0c0c0c;letter-spacing:0.29px;font-weight:bold;text-decoration:underline;">andrea</span>
<span class="t" style="left:80.0px;top:586.1px;font-size:12px;color:#1a1a1a;letter-spacing:0.03px;text-decoration:underline;">Знаю, что нравлюсь, но она говорит - нет!</span>
<span class="t" style="left:540.4px;top:586.1px;font-size:12px;color:#1a1a1a;letter-spacing:-0.29px;text-decoration:underline;">8</span>
<span class="t" style="left:631.4px;top:586.1px;font-size:12px;color:#1a1a1a;letter-spacing:-0.23px;text-decoration:underline;">x2x</span>
<span class="t" style="left:733.7px;top:586.1px;font-size:12px;color:#1a1a1a;letter-spacing:0.60px;">128</span>
<span class="t" style="left:789.5px;top:579.4px;font-size:11px;color:#444;letter-spacing:-0.01px;">16.1.2010, 16:56</span>
<span class="t" style="left:790.5px;top:594.7px;font-size:11px;color:#1a1a1a;letter-spacing:-0.17px;text-decoration:underline;">Посл. сообщение:</span>
<span class="t bn" style="left:884.0px;top:594.7px;font-size:11px;color:#0c0c0c;letter-spacing:-0.29px;font-weight:bold;text-decoration:underline;">x2x</span>
<span class="t" style="left:80.0px;top:629.8px;font-size:12px;color:#1a1a1a;letter-spacing:0.04px;text-decoration:underline;">Общение про бывших парней</span>
<span class="t" style="left:540.4px;top:629.8px;font-size:12px;color:#1a1a1a;letter-spacing:-0.29px;text-decoration:underline;">7</span>
<span class="t" style="left:611.4px;top:629.8px;font-size:12px;color:#1a1a1a;letter-spacing:0.34px;text-decoration:underline;">December</span>
<span class="t" style="left:734.7px;top:629.8px;font-size:12px;color:#1a1a1a;letter-spacing:0.10px;">203</span>
<span class="t" style="left:789.5px;top:622.1px;font-size:11px;color:#444;letter-spacing:-0.01px;">16.1.2010, 15:55</span>
<span class="t" style="left:790.5px;top:638.4px;font-size:11px;color:#1a1a1a;letter-spacing:-0.17px;text-decoration:underline;">Посл. сообщение:</span>
<span class="t bn" style="left:884.0px;top:638.4px;font-size:11px;color:#0c0c0c;letter-spacing:0.30px;font-weight:bold;text-decoration:underline;">Ferison</span>
<span class="t" style="left:79.4px;top:377.9px;font-size:11px;color:#444;letter-spacing:0.16px;">почему так?</span>
<span class="t" style="left:79.4px;top:421.5px;font-size:11px;color:#444;letter-spacing:0.11px;">Помогите, те кто разбираеться в человеке и отшениях с женским полом...</span>
<span class="t" style="left:259.3px;top:487.4px;font-size:23.5px;color:#d81010;letter-spacing:1.40px;">!!!!!!</span>
<span class="t" style="left:184.8px;top:501.2px;font-size:9px;color:#111;letter-spacing:-0.60px;">1</span>
<span class="t" style="left:201.0px;top:501.2px;font-size:9px;color:#111;letter-spacing:0.00px;">2</span>
<span class="t dj" style="left:29.0px;top:671.7px;font-size:11px;color:#222;letter-spacing:0.38px;">Ключевое слово</span>
<span class="t dj" style="left:237.5px;top:671.7px;font-size:11px;color:#111;letter-spacing:-0.06px;">Найти в этом форуме</span>
<span class="t sh" style="left:28.0px;top:10.5px;font-size:12px;color:#fff;transform:scaleX(0.9751);font-weight:bold;">Соблазнители.ru - «Первый независимый форум соблазнителей» -&gt; Вопрос-Ответ - Mozilla Firefox</span>
<span class="t dj" style="left:12.0px;top:33.6px;font-size:11px;color:#000;transform:scaleX(0.8433);">Файл</span>
<span class="t dj" style="left:53.2px;top:33.6px;font-size:11px;color:#000;transform:scaleX(0.8925);">Правка</span>
<span class="t dj" style="left:106.1px;top:33.6px;font-size:11px;color:#000;transform:scaleX(0.8571);">Вид</span>
<span class="t dj" style="left:142.2px;top:33.6px;font-size:11px;color:#000;transform:scaleX(0.8478);">Журнал</span>
<span class="t dj" style="left:197.2px;top:33.6px;font-size:11px;color:#000;transform:scaleX(0.8889);">Закладки</span>
<span class="t dj" style="left:261.9px;top:33.6px;font-size:11px;color:#000;transform:scaleX(0.8792);">Инструменты</span>
<span class="t dj" style="left:346.9px;top:33.6px;font-size:11px;color:#000;transform:scaleX(0.8729);">Справка</span>
<span class="t dj" style="left:224.7px;top:63.8px;font-size:11px;color:#000;transform:scaleX(0.8816);">http://forum.soblazniteli.ru/index.php?showforum=53</span>
<span class="t dj" style="left:822.1px;top:63.8px;font-size:11px;color:#b2b2b2;transform:scaleX(0.8726);">BS Player Customized Web S</span>
<span class="t dj" style="left:27.5px;top:95.0px;font-size:11px;color:#000;transform:scaleX(0.8705);">Самые популярные</span>
<span class="t dj" style="left:153.0px;top:95.0px;font-size:11px;color:#000;transform:scaleX(0.9000);">тексты</span>
<span class="t dj" style="left:217.7px;top:95.0px;font-size:11px;color:#000;transform:scaleX(0.8814);">Мужской журнал - М...</span>
<span class="t dj" style="left:358.9px;top:95.0px;font-size:11px;color:#000;transform:scaleX(0.8833);">PictureShack.ru</span>
<span class="t dj" style="left:461.7px;top:95.0px;font-size:11px;color:#000;transform:scaleX(0.8915);">Проект Соблазнител...</span>
<span class="t dj" style="left:605.6px;top:95.0px;font-size:11px;color:#000;transform:scaleX(0.8898);">Видеоуроки » Элект...</span>
<span class="t dj" style="left:746.6px;top:95.0px;font-size:11px;color:#000;transform:scaleX(0.8923);">Китайский точечный...</span>
<span class="t sf" style="left:196.3px;top:90.2px;font-size:16px;color:#e2201a;transform:scaleX(0.5741);font-weight:bold;">MH</span>
<span class="t dj" style="left:1001.2px;top:92.8px;font-size:12px;color:#222;transform:scaleX(1.2500);">»</span>
<span class="t dj" style="left:281.8px;top:121.5px;font-size:11px;color:#000;transform:scaleX(0.8816);">Файлы</span>
<span class="t dj" style="left:35.1px;top:149.2px;font-size:11px;color:#000;transform:scaleX(0.9062);">@MAIL.RU: почта, новости...</span>
<span class="t dj" style="left:234.3px;top:149.2px;font-size:11px;color:#000;transform:scaleX(0.8887);">Ответы@Mail.Ru: Знакомс...</span>
<span class="t dj" style="left:434.0px;top:149.2px;font-size:11px;color:#000;transform:scaleX(0.8981);">Ответы@Mail.Ru: Опрос: К...</span>
<span class="t dj" style="left:632.3px;top:149.2px;font-size:11px;color:#000;transform:scaleX(0.8776);">Залить Картинку - Загрузи...</span>
<span class="t dj" style="left:832.2px;top:149.2px;font-size:11px;color:#000;transform:scaleX(0.9071);font-weight:bold;">Соблазнители.ru - «Пе...</span>
<span class="t dj" style="left:8.9px;top:718.2px;font-size:11px;color:#000;transform:scaleX(0.9316);">Готово</span>
<span class="t" style="left:190.5px;top:747.1px;font-size:12px;color:#fff;letter-spacing:0.07px;">Соблазнители.ru - ...</span>
<span class="t" style="left:348.5px;top:747.1px;font-size:12px;color:#fff;letter-spacing:-0.03px;">H:\Мои документы\...</span>
<span class="t dj" style="left:984.3px;top:747.7px;font-size:11.7px;color:#fff;transform:scaleX(0.9094);">22:00</span>
<span class="t" style="left:9.3px;top:116.9px;font-size:17.6px;color:#22639a;transform:scaleX(0.7200);font-weight:bold;">DM</span>
<span class="t" style="left:29.2px;top:116.9px;font-size:17.6px;color:#b9703f;transform:scaleX(0.6143);font-weight:bold;">Bar</span></div>
</body>
</html>
